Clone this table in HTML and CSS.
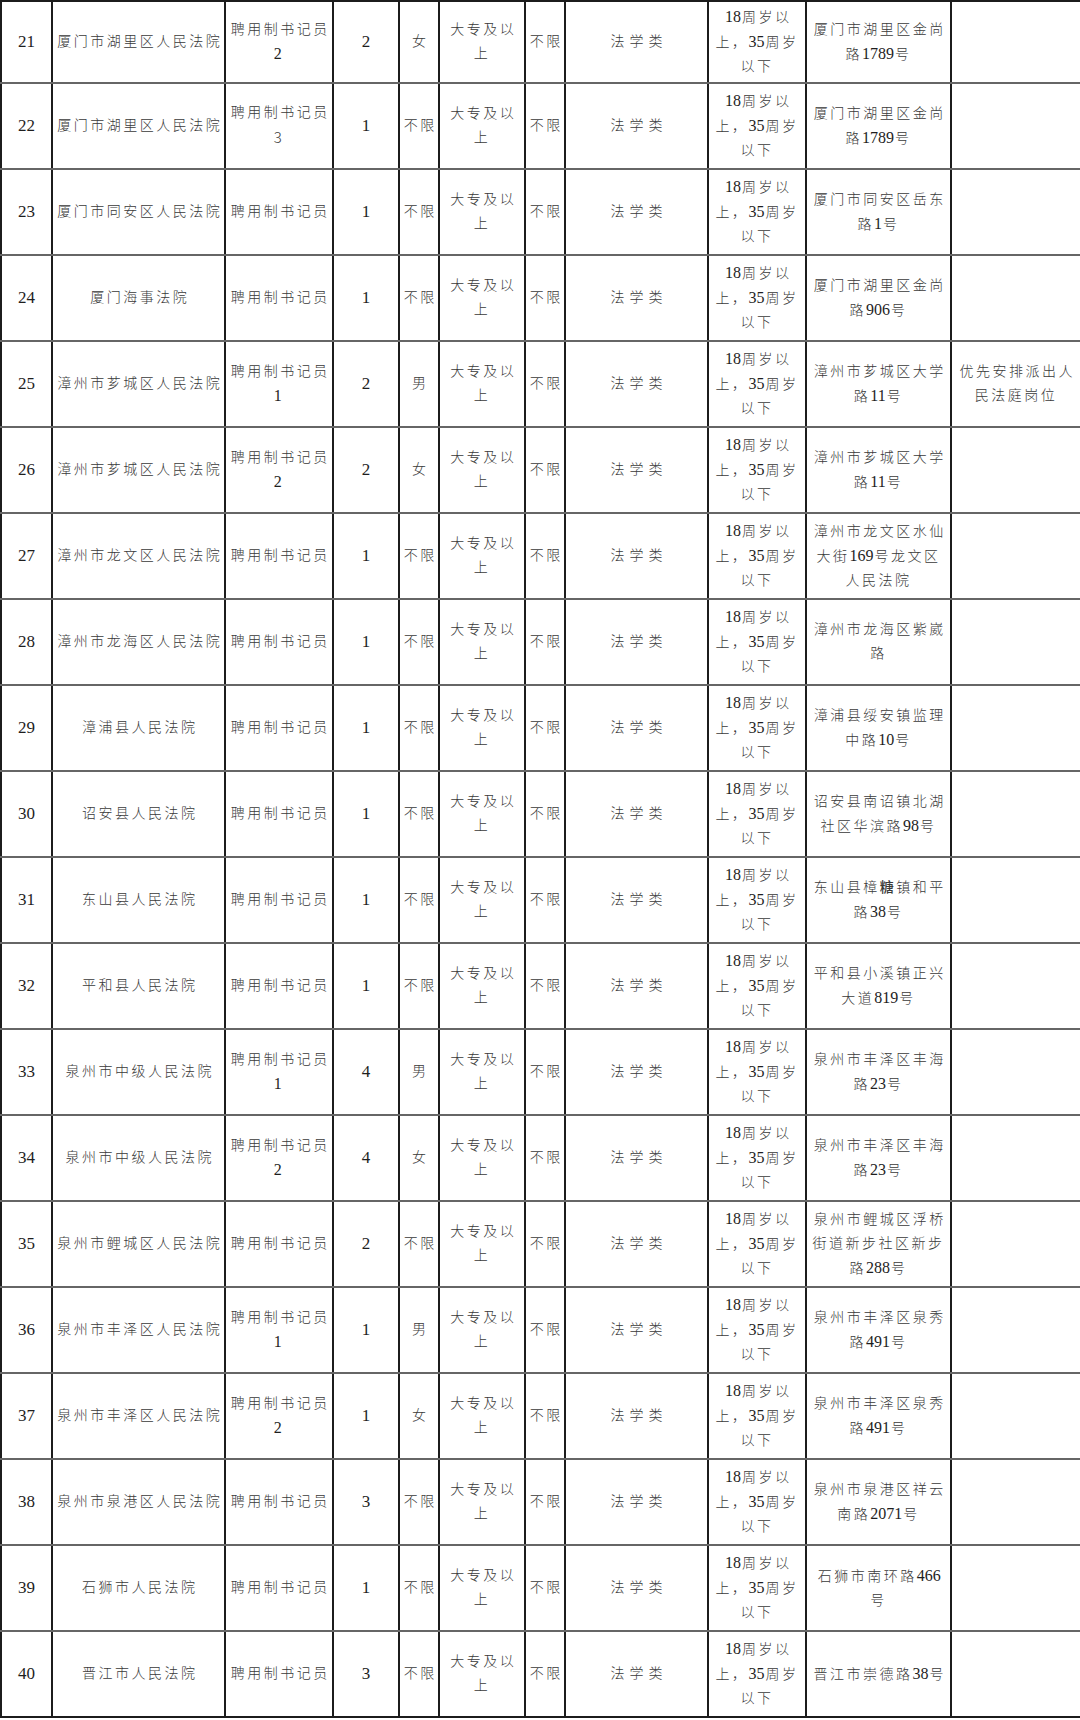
FILE: index.html
```html
<!DOCTYPE html>
<html lang="zh-CN">
<head>
<meta charset="utf-8">
<title>招聘岗位表</title>
<link rel="stylesheet" href="styles.css">
</head>
<body>
<table class="grid">
<colgroup>
<col class="c-no"><col class="c-org"><col class="c-post"><col class="c-num"><col class="c-sex"><col class="c-edu"><col class="c-lim"><col class="c-major"><col class="c-age"><col class="c-addr"><col class="c-note">
</colgroup>
<tbody>
<tr class="first"><td class="n">21</td><td>厦门市湖里区人民法院</td><td>聘用制书记员<br><span class="d">2</span></td><td class="n">2</td><td>女</td><td>大专及以<br>上</td><td>不限</td><td class="wide">法学类</td><td><span class="t">18</span>周岁以<br>上，<span class="t">35</span>周岁<br>以下</td><td>厦门市湖里区金尚<br>路<span class="t">1789</span>号</td><td></td></tr>
<tr><td class="n">22</td><td>厦门市湖里区人民法院</td><td>聘用制书记员<br><span class="s">3</span></td><td class="n">1</td><td>不限</td><td>大专及以<br>上</td><td>不限</td><td class="wide">法学类</td><td><span class="t">18</span>周岁以<br>上，<span class="t">35</span>周岁<br>以下</td><td>厦门市湖里区金尚<br>路<span class="t">1789</span>号</td><td></td></tr>
<tr><td class="n">23</td><td>厦门市同安区人民法院</td><td>聘用制书记员</td><td class="n">1</td><td>不限</td><td>大专及以<br>上</td><td>不限</td><td class="wide">法学类</td><td><span class="t">18</span>周岁以<br>上，<span class="t">35</span>周岁<br>以下</td><td>厦门市同安区岳东<br>路<span class="t">1</span>号</td><td></td></tr>
<tr><td class="n">24</td><td>厦门海事法院</td><td>聘用制书记员</td><td class="n">1</td><td>不限</td><td>大专及以<br>上</td><td>不限</td><td class="wide">法学类</td><td><span class="t">18</span>周岁以<br>上，<span class="t">35</span>周岁<br>以下</td><td>厦门市湖里区金尚<br>路<span class="t">906</span>号</td><td></td></tr>
<tr><td class="n">25</td><td>漳州市芗城区人民法院</td><td>聘用制书记员<br><span class="d">1</span></td><td class="n">2</td><td>男</td><td>大专及以<br>上</td><td>不限</td><td class="wide">法学类</td><td><span class="t">18</span>周岁以<br>上，<span class="t">35</span>周岁<br>以下</td><td>漳州市芗城区大学<br>路<span class="t">11</span>号</td><td>优先安排派出人<br>民法庭岗位</td></tr>
<tr><td class="n">26</td><td>漳州市芗城区人民法院</td><td>聘用制书记员<br><span class="d">2</span></td><td class="n">2</td><td>女</td><td>大专及以<br>上</td><td>不限</td><td class="wide">法学类</td><td><span class="t">18</span>周岁以<br>上，<span class="t">35</span>周岁<br>以下</td><td>漳州市芗城区大学<br>路<span class="t">11</span>号</td><td></td></tr>
<tr><td class="n">27</td><td>漳州市龙文区人民法院</td><td>聘用制书记员</td><td class="n">1</td><td>不限</td><td>大专及以<br>上</td><td>不限</td><td class="wide">法学类</td><td><span class="t">18</span>周岁以<br>上，<span class="t">35</span>周岁<br>以下</td><td>漳州市龙文区水仙<br>大街<span class="t">169</span>号龙文区<br>人民法院</td><td></td></tr>
<tr><td class="n">28</td><td>漳州市龙海区人民法院</td><td>聘用制书记员</td><td class="n">1</td><td>不限</td><td>大专及以<br>上</td><td>不限</td><td class="wide">法学类</td><td><span class="t">18</span>周岁以<br>上，<span class="t">35</span>周岁<br>以下</td><td>漳州市龙海区紫崴<br>路</td><td></td></tr>
<tr><td class="n">29</td><td>漳浦县人民法院</td><td>聘用制书记员</td><td class="n">1</td><td>不限</td><td>大专及以<br>上</td><td>不限</td><td class="wide">法学类</td><td><span class="t">18</span>周岁以<br>上，<span class="t">35</span>周岁<br>以下</td><td>漳浦县绥安镇监理<br>中路<span class="t">10</span>号</td><td></td></tr>
<tr><td class="n">30</td><td>诏安县人民法院</td><td>聘用制书记员</td><td class="n">1</td><td>不限</td><td>大专及以<br>上</td><td>不限</td><td class="wide">法学类</td><td><span class="t">18</span>周岁以<br>上，<span class="t">35</span>周岁<br>以下</td><td>诏安县南诏镇北湖<br>社区华滨路<span class="t">98</span>号</td><td></td></tr>
<tr><td class="n">31</td><td>东山县人民法院</td><td>聘用制书记员</td><td class="n">1</td><td>不限</td><td>大专及以<br>上</td><td>不限</td><td class="wide">法学类</td><td><span class="t">18</span>周岁以<br>上，<span class="t">35</span>周岁<br>以下</td><td>东山县樟<b class="b">糖</b>镇和平<br>路<span class="t">38</span>号</td><td></td></tr>
<tr><td class="n">32</td><td>平和县人民法院</td><td>聘用制书记员</td><td class="n">1</td><td>不限</td><td>大专及以<br>上</td><td>不限</td><td class="wide">法学类</td><td><span class="t">18</span>周岁以<br>上，<span class="t">35</span>周岁<br>以下</td><td>平和县小溪镇正兴<br>大道<span class="t">819</span>号</td><td></td></tr>
<tr><td class="n">33</td><td>泉州市中级人民法院</td><td>聘用制书记员<br><span class="d">1</span></td><td class="n">4</td><td>男</td><td>大专及以<br>上</td><td>不限</td><td class="wide">法学类</td><td><span class="t">18</span>周岁以<br>上，<span class="t">35</span>周岁<br>以下</td><td>泉州市丰泽区丰海<br>路<span class="t">23</span>号</td><td></td></tr>
<tr><td class="n">34</td><td>泉州市中级人民法院</td><td>聘用制书记员<br><span class="d">2</span></td><td class="n">4</td><td>女</td><td>大专及以<br>上</td><td>不限</td><td class="wide">法学类</td><td><span class="t">18</span>周岁以<br>上，<span class="t">35</span>周岁<br>以下</td><td>泉州市丰泽区丰海<br>路<span class="t">23</span>号</td><td></td></tr>
<tr><td class="n">35</td><td>泉州市鲤城区人民法院</td><td>聘用制书记员</td><td class="n">2</td><td>不限</td><td>大专及以<br>上</td><td>不限</td><td class="wide">法学类</td><td><span class="t">18</span>周岁以<br>上，<span class="t">35</span>周岁<br>以下</td><td>泉州市鲤城区浮桥<br>街道新步社区新步<br>路<span class="t">288</span>号</td><td></td></tr>
<tr><td class="n">36</td><td>泉州市丰泽区人民法院</td><td>聘用制书记员<br><span class="d">1</span></td><td class="n">1</td><td>男</td><td>大专及以<br>上</td><td>不限</td><td class="wide">法学类</td><td><span class="t">18</span>周岁以<br>上，<span class="t">35</span>周岁<br>以下</td><td>泉州市丰泽区泉秀<br>路<span class="t">491</span>号</td><td></td></tr>
<tr><td class="n">37</td><td>泉州市丰泽区人民法院</td><td>聘用制书记员<br><span class="d">2</span></td><td class="n">1</td><td>女</td><td>大专及以<br>上</td><td>不限</td><td class="wide">法学类</td><td><span class="t">18</span>周岁以<br>上，<span class="t">35</span>周岁<br>以下</td><td>泉州市丰泽区泉秀<br>路<span class="t">491</span>号</td><td></td></tr>
<tr><td class="n">38</td><td>泉州市泉港区人民法院</td><td>聘用制书记员</td><td class="n">3</td><td>不限</td><td>大专及以<br>上</td><td>不限</td><td class="wide">法学类</td><td><span class="t">18</span>周岁以<br>上，<span class="t">35</span>周岁<br>以下</td><td>泉州市泉港区祥云<br>南路<span class="t">2071</span>号</td><td></td></tr>
<tr><td class="n">39</td><td>石狮市人民法院</td><td>聘用制书记员</td><td class="n">1</td><td>不限</td><td>大专及以<br>上</td><td>不限</td><td class="wide">法学类</td><td><span class="t">18</span>周岁以<br>上，<span class="t">35</span>周岁<br>以下</td><td>石狮市南环路<span class="t">466</span><br>号</td><td></td></tr>
<tr><td class="n">40</td><td>晋江市人民法院</td><td>聘用制书记员</td><td class="n">3</td><td>不限</td><td>大专及以<br>上</td><td>不限</td><td class="wide">法学类</td><td><span class="t">18</span>周岁以<br>上，<span class="t">35</span>周岁<br>以下</td><td>晋江市崇德路<span class="t">38</span>号</td><td></td></tr>
</tbody>
</table>
</body>
</html>
```

FILE: styles.css
```css
html, body {
  margin: 0;
  padding: 0;
  background: #ffffff;
}

.grid {
  width: 1080px;
  border-collapse: collapse;
  table-layout: fixed;
  font-family: "Liberation Serif", "Noto Sans CJK SC", serif;
  font-size: 14px;
  font-weight: 300;
  color: #3a3a3a;
}

.c-no { width: 51px; }
.c-org { width: 173px; }
.c-post { width: 108px; }
.c-num { width: 66px; }
.c-sex { width: 40px; }
.c-edu { width: 86px; }
.c-lim { width: 40px; }
.c-major { width: 143px; }
.c-age { width: 98px; }
.c-addr { width: 145px; }
.c-note { width: 130px; }

.grid tr { height: 86px; }
.grid tr.first { height: 82px; }

.grid td {
  border-left: 2px solid #1c1c1c;
  border-right: 2px solid #1c1c1c;
  border-top: 2px solid #666666;
  border-bottom: 2px solid #666666;
  padding: 0;
  text-align: center;
  vertical-align: middle;
  white-space: nowrap;
  overflow: hidden;
  line-height: 24px;
  letter-spacing: 2.5px;
  text-indent: 2.5px;
}

.grid tr.first td { border-top-color: #1c1c1c; }
.grid tr:last-child td { border-bottom-color: #1c1c1c; }

.grid td.n {
  font-size: 17px;
  font-weight: 400;
  color: #1e1e1e;
  letter-spacing: 0;
  text-indent: 0;
}

.grid td.wide {
  letter-spacing: 5px;
  text-indent: 5px;
}

.t {
  font-size: 16px;
  font-weight: 400;
  color: #1e1e1e;
  letter-spacing: 0;
  margin-right: 1px;
}

.d {
  font-size: 16px;
  font-weight: 400;
  color: #1e1e1e;
}

.s {
  font-family: "Noto Sans CJK SC", sans-serif;
  font-size: 15px;
}

.b {
  font-weight: 500;
}
```
